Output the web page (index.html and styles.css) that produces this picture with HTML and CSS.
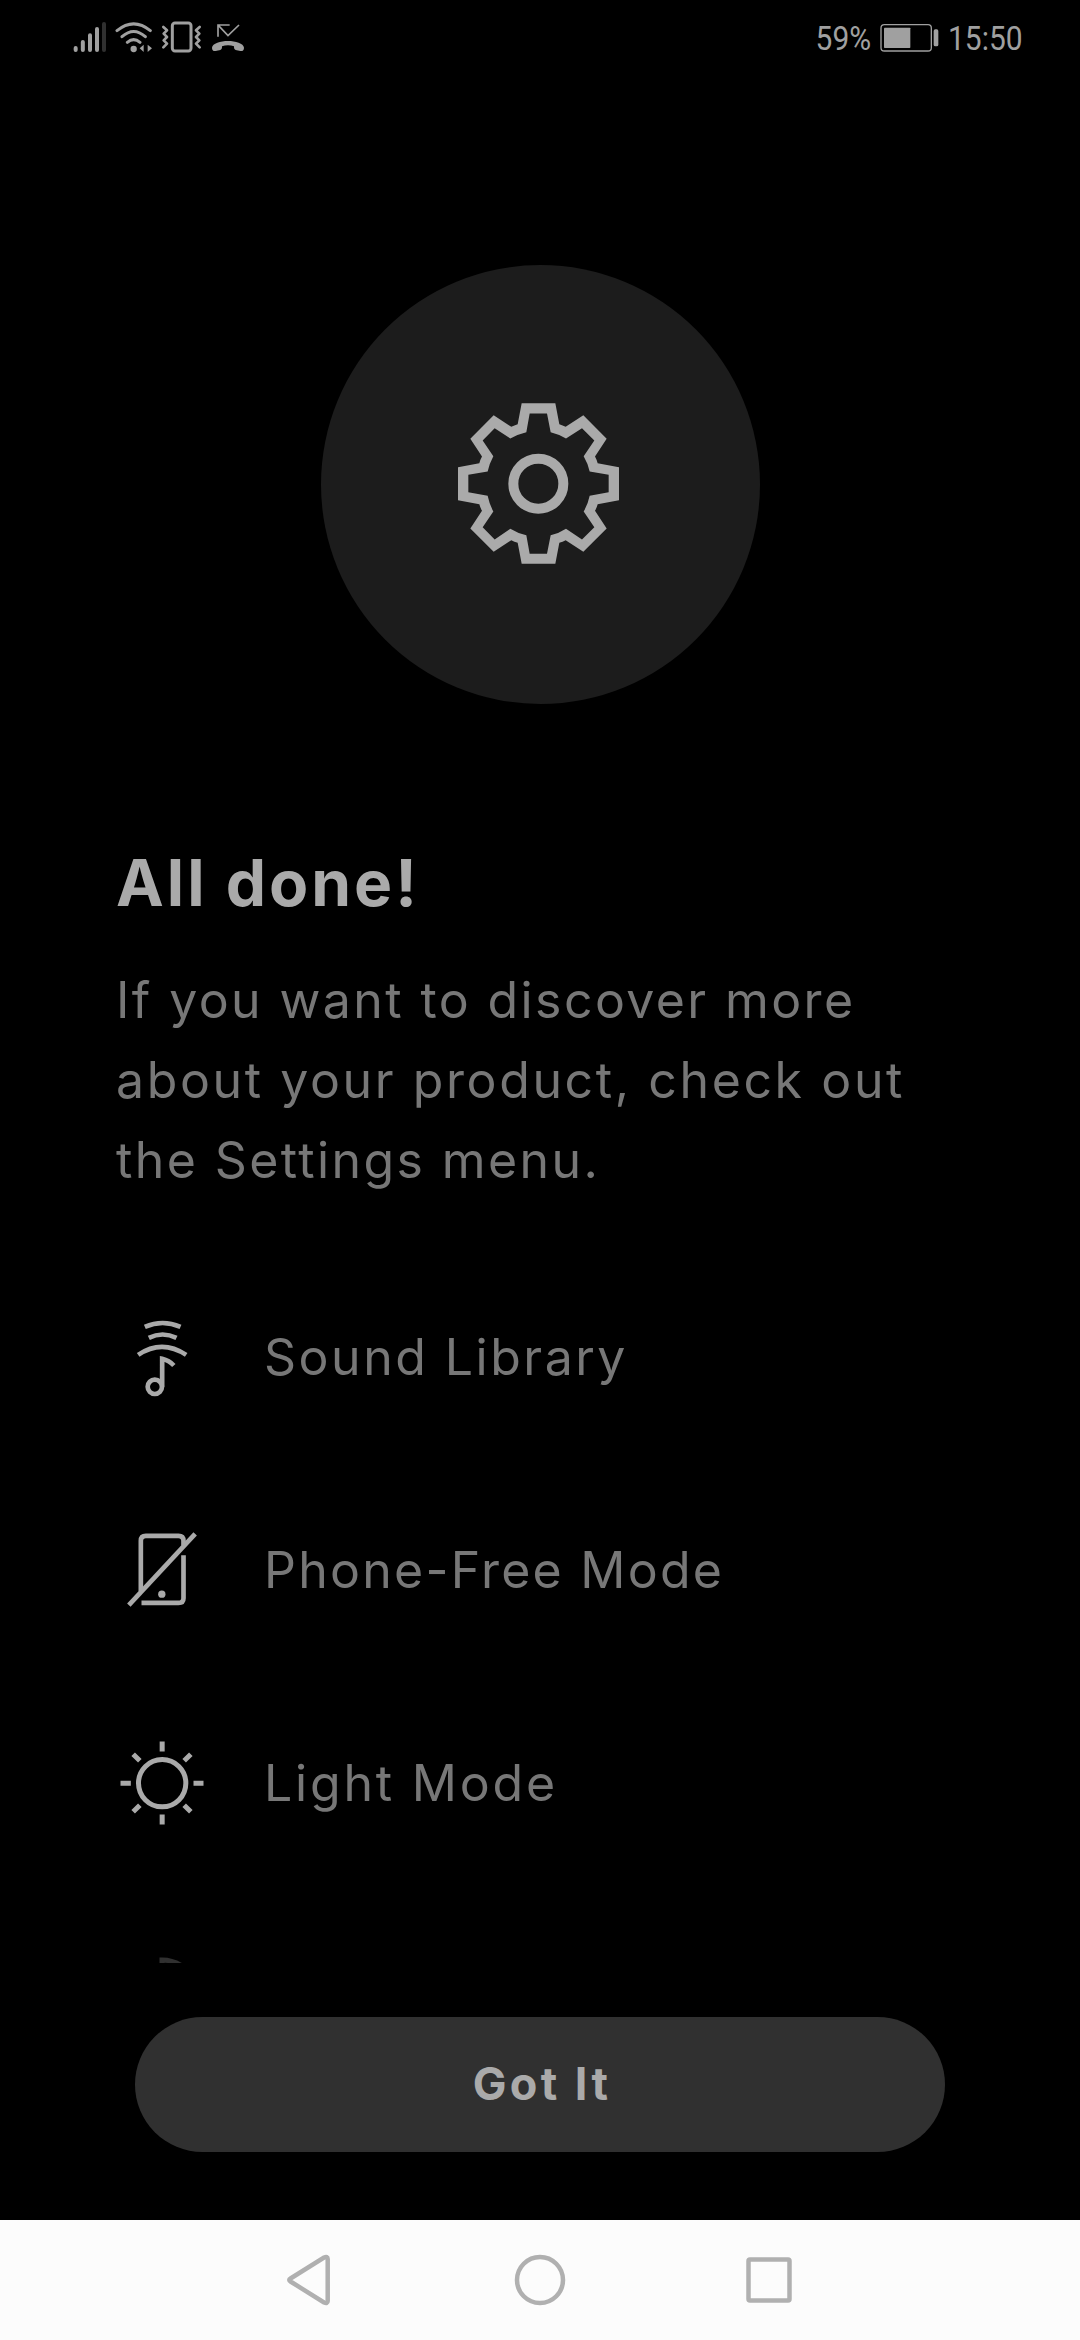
FILE: index.html
```html
<!DOCTYPE html>
<html lang="en">
<head>
    <meta charset="UTF-8">
    <meta name="viewport" content="width=device-width, initial-scale=1.0">
    <title>All done!</title>
    <link rel="stylesheet" href="styles.css">
</head>
<body>

    <div class="screen">

        <!-- Status bar -->
        <header class="status-bar">
            <div class="status-icons">
                <svg width="34" height="34" viewBox="39 30 102 102" fill="none" stroke="#a0a0a0" stroke-width="12" stroke-linecap="round">
                    <path d="M47 114v6M68.500 96v24M90 76v44M111 57v63"/>
                    <path d="M132 42v78" stroke="#303030"/>
                </svg>
                <svg width="38" height="34" viewBox="165 30 114 102" fill="none" stroke="#a0a0a0" stroke-width="9" stroke-linecap="round">
                    <path d="M171 62Q221 21 271 62M186 80Q221 49 256 80M202 97Q221 81 240 97"/>
                    <circle cx="221" cy="117" r="9.500" fill="#a0a0a0" stroke="none"/>
                    <path d="M251 104v22l-12-11zM263 104v22l13-11z" fill="#a0a0a0" stroke="none"/>
                </svg>
                <svg width="41" height="34" viewBox="303 30 123 102" fill="none" stroke="#a0a0a0" stroke-width="8" stroke-linejoin="round" stroke-linecap="round">
                    <rect x="337" y="39" width="56" height="84" rx="8" stroke-width="9"/>
                    <path d="M310 51l11 10-10 10 10 10-10 10 10 10-11 11M419 51l-11 10 10 10-10 10 10 10-10 10 11 11"/>
                </svg>
                <svg width="35" height="34" viewBox="450 30 105 102" fill="none" stroke="#a0a0a0" stroke-width="5">
                    <path d="M474 80V45h35M475 46l29 31 33-32"/>
                    <path d="M456 113C457 100 482 93 504 93s47 7 48 20c0 8-4 11-11 10l-14-3c-5-2-5-5-5-11-11-4-25-4-36 0 0 6 0 9-5 11l-14 3c-7 1-11-2-11-10z" fill="#a0a0a0" stroke="none"/>
                </svg>
            </div>
            <div class="status-info">
                <span class="battery-level">59%</span>
                <svg width="59" height="30" viewBox="242 38 177 90" fill="none" stroke="#a0a0a0">
                    <rect x="245" y="43" width="151" height="79" rx="10" stroke-width="4"/>
                    <rect x="254" y="52" width="79" height="61" rx="2" fill="#a0a0a0" stroke="none"/>
                    <rect x="403" y="57" width="14" height="51" rx="5" fill="#a0a0a0" stroke="none"/>
                </svg>
                <span class="clock">15:50</span>
            </div>
        </header>

        <!-- Content -->
        <main class="content">
            <div class="hero">
                <svg class="gear" width="161" height="161" viewBox="473 459 483 482" fill="#aaaaaa" fill-rule="evenodd">
                    <path d="M664 459H765L777 522Q787 525 796 530L849 495 919 566 884 619Q889 628 892 639L956 651V750L892 762Q889 773 884 782L919 835 849 905 796 870Q787 875 777 878L765 941H664L652 878Q642 875 633 870L580 905 510 835 545 782Q540 773 537 762L473 750V651L537 639Q540 628 545 619L510 566 580 495 633 530Q642 525 652 522ZM688 490L678 546Q652 552 630 565L583 534 547 571 579 618Q567 640 562 664L504 674V726L562 737Q567 762 579 784L547 831 583 868 630 836Q652 850 678 855L688 911H740L751 855Q776 850 797 836L845 868 882 831 850 784Q863 762 868 737L925 726V674L868 664Q863 640 850 618L882 571 845 534 797 565Q776 552 751 546L740 490Z"/>
                    <circle cx="714" cy="700.500" r="75" fill="none" stroke="#aaaaaa" stroke-width="30"/>
                </svg>
            </div>

            <h1>All done!</h1>
            <p class="intro">
                <span class="line">If you want to discover more</span>
                <span class="line product">about your product, check out</span>
                <span class="line">the Settings menu.</span>
            </p>

            <ul class="features">
                <li>
                    <svg width="90" height="90" viewBox="52.5 34.5 270 270" fill="none" stroke="#aaaaaa" stroke-width="14">
                        <path d="M136 79Q189 56 243 79M148 112Q189 92 231 112M116 163Q187 115 260 163"/>
                        <path d="M188 259V175Q209 180 223 195"/>
                        <circle cx="166" cy="259" r="21.500"/>
                    </svg>
                    <span class="sound">Sound Library</span>
                </li>
                <li>
                    <svg width="90" height="90" viewBox="22.5 43.5 270 270" fill="none" stroke="#aaaaaa" stroke-width="14">
                        <path d="M94 242V91Q94 76 109 76H207Q222 76 222 91V105M222 134V263Q222 277 207 277H96"/>
                        <path d="M58 284L257 70"/>
                        <circle cx="157" cy="251" r="11" fill="#aaaaaa" stroke="none"/>
                    </svg>
                    <span class="phone-free">Phone-Free Mode</span>
                </li>
                <li>
                    <svg width="90" height="90" viewBox="22.5 22.5 270 270" fill="none" stroke="#aaaaaa" stroke-width="15">
                        <circle cx="158" cy="158" r="71"/>
                        <path d="M158 33v30M158 252v30M33 158h31M252 158h30M71 71l20 20M224 91l20-20M71 244l20-20M224 224l20 20"/>
                    </svg>
                    <span class="light">Light Mode</span>
                </li>
                <li>
                    <svg width="90" height="90" viewBox="-7.5 61.5 270 270" fill="none" stroke="#303030" stroke-width="15">
                        <path d="M127.500 240V88.500C165 88 240 120 240 195S165 305 127.500 302Z"/>
                    </svg>
                </li>
            </ul>
        </main>

        <button type="button" class="got-it">Got It</button>

        <!-- Navigation bar -->
        <nav class="nav-bar">
            <svg width="52" height="52" viewBox="0 0 52 52">
                <path d="M5.500 24.500L39 3.500Q42.700 2 42.700 5V47Q42.700 50 39 48.500L5.500 27.500Q3 26 5.500 24.500Z"/>
            </svg>
            <svg width="52" height="52" viewBox="0 0 52 52">
                <circle cx="26" cy="26" r="23"/>
            </svg>
            <svg width="52" height="52" viewBox="0 0 52 52">
                <rect x="5.500" y="5.500" width="41" height="41" rx="1.500"/>
            </svg>
        </nav>

    </div>

</body>
</html>
```
FILE: styles.css
```css
* {
    box-sizing: border-box;
}

body {
    margin: 0;
    background-color: #000;
    font-family: Inter, "Open Sans", sans-serif;
}

svg {
    display: block;
    flex: none;
}

.screen {
    display: flex;
    flex-direction: column;
    width: 1080px;
    height: 2340px;
    overflow: hidden;
}

/* Status bar */
.status-bar {
    display: flex;
    justify-content: space-between;
    height: 76px;
    padding: 0 56px 0 73px;
    color: #a0a0a0;
    font-family: Roboto, sans-serif;
    font-size: 34px;
    line-height: 76px;
}

.status-icons {
    display: flex;
    gap: 8px;
    padding-top: 20px;
}

.status-info {
    display: flex;
    align-items: center;
}

.battery-level, .clock {
    transform: scaleX(0.88);
}

.battery-level {
    transform-origin: right;
    margin-right: 9px;
}

.clock {
    transform-origin: left;
    width: 76px;
    margin-left: 9px;
}

/* Content */
.content {
    height: 1887px;
}

.hero {
    display: flex;
    align-items: center;
    justify-content: center;
    width: 439px;
    height: 439px;
    margin: 189px auto 0;
    padding: 0 4px 2px 0;
    border-radius: 50%;
    background-color: #1c1c1c;
}

h1 {
    height: 80px;
    margin: 139px 0 0 116px;
    color: #aaa;
    font-size: 64px;
    font-weight: 700;
    line-height: 80px;
    letter-spacing: 3px;
}

.intro {
    margin: 37px 0 0 116px;
    color: #777;
    font-size: 50px;
    line-height: 80px;
    letter-spacing: 2.4px;
}

.line {
    display: block;
    white-space: nowrap;
}

.product {
    letter-spacing: 2.6px;
}

.features {
    height: 713px;
    margin: 50px 0 0;
    padding: 0 0 0 117px;
    overflow: hidden;
    list-style: none;
}

.features li {
    display: flex;
    align-items: center;
    gap: 57px;
    height: 213px;
    color: #777;
    font-size: 50px;
    white-space: nowrap;
}

.sound {
    letter-spacing: 2.5px;
}

.phone-free {
    letter-spacing: 2.25px;
}

.light {
    letter-spacing: 2.8px;
}

.got-it {
    width: 810px;
    height: 135px;
    margin: 54px auto 0;
    padding: 0 0 2px 4px;
    border: none;
    border-radius: 68px;
    background-color: #303030;
    color: #aaa;
    font-family: inherit;
    font-size: 45px;
    font-weight: 700;
    letter-spacing: 3.4px;
}

/* Navigation bar */
.nav-bar {
    display: flex;
    align-items: center;
    justify-content: center;
    gap: 177px;
    height: 120px;
    margin-top: auto;
    background-color: #fcfcfc;
    fill: none;
    stroke: #b0b0b0;
    stroke-width: 4.5;
}
```
